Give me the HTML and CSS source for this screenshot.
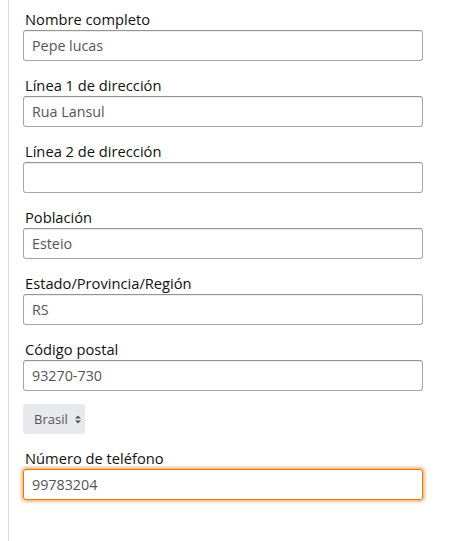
FILE: index.html
```html
<!DOCTYPE html>
<html lang="es">
<head>
<meta charset="utf-8">
<link rel="stylesheet" href="styles.css">
</head>
<body>
<div class="panel">
  <form class="form">
    <div class="group">
      <label class="label">Nombre completo</label>
      <div class="input">Pepe lucas</div>
    </div>
    <div class="group">
      <label class="label">Línea 1 de dirección</label>
      <div class="input">Rua Lansul</div>
    </div>
    <div class="group">
      <label class="label">Línea 2 de dirección</label>
      <div class="input"></div>
    </div>
    <div class="group">
      <label class="label">Población</label>
      <div class="input">Esteio</div>
    </div>
    <div class="group">
      <label class="label">Estado/Provincia/Región</label>
      <div class="input">RS</div>
    </div>
    <div class="group">
      <label class="label">Código postal</label>
      <div class="input">93270-730</div>
    </div>
    <div class="group">
      <div class="select">Brasil
        <svg class="arrows" width="6" height="9" viewBox="0 0 6 9"><path d="M0 3.5 L3 0.5 L6 3.5 Z M0 5.5 L3 8.5 L6 5.5 Z" fill="#555"/></svg>
      </div>
    </div>
    <div class="group">
      <label class="label">Número de teléfono</label>
      <div class="input focus">99783204</div>
    </div>
  </form>
</div>
</body>
</html>
```
FILE: styles.css
```css
html, body {
  margin: 0;
  padding: 0;
  background: #fff;
  height: 100%;
}
body {
  padding-left: 8px;
  box-sizing: border-box;
  font-family: "Open Sans", "Noto Sans", sans-serif;
  color: #111;
}
.panel {
  border-left: 1px solid #dddddd;
  height: 100%;
  padding: 7px 0 0 14px;
  box-sizing: border-box;
}
.form {
  width: 400px;
  display: flex;
  flex-direction: column;
  gap: 12px;
}
.group {
  display: flex;
  flex-direction: column;
}
.label {
  display: block;
  font-size: 14.7px;
  line-height: 20px;
  height: 20px;
  padding-top: 2px;
  margin-bottom: 1px;
  padding-left: 2px;
  color: #111;
}
.input {
  height: 31px;
  box-sizing: border-box;
  border: 1px solid #a6a6a6;
  border-top-color: #949494;
  border-radius: 3px;
  padding: 0 8px;
  font-size: 14.3px;
  line-height: 29px;
  color: #555;
  box-shadow: 0 1px 0 rgba(255,255,255,.5), 0 1px 0 rgba(0,0,0,.07) inset;
}
.input.focus {
  border-color: #e77600;
  box-shadow: 0 0 3px 2px rgba(228,121,17,.5);
  color: #555;
}
.select {
  align-self: flex-start;
  margin-top: 1px;
  height: 30px;
  width: 62px;
  box-sizing: border-box;
  background: #e7e9ec;
  border-radius: 3px;
  font-size: 13px;
  color: #555;
  display: flex;
  align-items: center;
  padding-left: 11px;
  gap: 7px;
}
.arrows {
  display: block;
}
```
